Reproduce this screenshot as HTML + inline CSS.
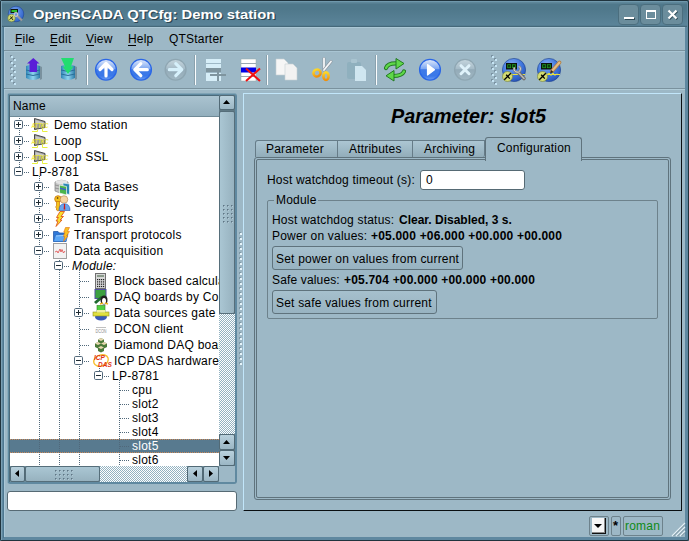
<!DOCTYPE html>
<html><head><meta charset="utf-8">
<style>
*{box-sizing:border-box;margin:0;padding:0}
html,body{width:689px;height:541px;overflow:hidden;background:#4d7383}
body{position:relative;font-family:"Liberation Sans",sans-serif;font-size:12px;color:#000}
.a{position:absolute}
.t{position:absolute;white-space:nowrap;line-height:14px;height:14px;letter-spacing:.2px}
#vp .t{letter-spacing:.25px}
.b{font-weight:bold}
.ul{position:absolute;height:1px;background:#000}
svg{position:absolute;overflow:visible}
.sb{border:1px solid #526a76;border-radius:2px;background:linear-gradient(#b9d1dd,#9bb6c4)}
.sl{border:1px solid #566e7a;border-radius:2px}
.tab{border:1px solid #667c88;border-bottom:none;background:linear-gradient(#acc6d3,#92adba)}
.btn{border:1px solid #5f737d;border-radius:3px;background:linear-gradient(#a6c0cd,#98b3c1)}
</style></head><body>
<!-- window frame -->
<div class="a" style="left:0;top:0;width:689px;height:541px;background:#5f88a0;border:1px solid #20343e;border-radius:2px"></div><div class="a" style="left:1px;top:1px;width:1px;height:539px;background:#7aa0b4"></div><div class="a" style="left:3px;top:27px;width:1px;height:511px;background:#4e7890"></div>
<!-- title bar -->
<div class="a" style="left:2px;top:1px;width:685px;height:26px;background:linear-gradient(#6f98ac 0px,#6f98ac 1px,#5e8699 1px,#5e8699 2px,#4f788b 3px,#4f788b 8px,#5a8398 23px,#5a8398 24px,#557d92 24px,#557d92 25px,#46697a 25px)"></div>
<svg style="left:0;top:0" width="30" height="27"><defs><radialGradient id="glogo2" cx=".4" cy=".35" r=".7"><stop offset="0" stop-color="#7aa8f0"/><stop offset="1" stop-color="#2a5ec8"/></radialGradient></defs>
<circle cx="16" cy="14" r="7.8" fill="url(#glogo2)" stroke="#1d3f8a" stroke-width=".5"/>
<rect x="10.5" y="9" width="7.5" height="4" fill="#101a10"/><rect x="11.5" y="10" width="5.5" height="2" fill="#2cc02c"/>
<circle cx="11.5" cy="18" r="3.8" fill="#d0d870" stroke="#5a6a30" stroke-width=".5"/>
<path d="M9.5 19.5L13 16.5M10.5 16.5L13 20" stroke="#000" stroke-width=".8"/>
<path d="M16.5 15L22 20.5" stroke="#9a9a9a" stroke-width="2.2"/><circle cx="16" cy="14.5" r="1.8" fill="none" stroke="#c8c8c8" stroke-width="1.2"/>
</svg>
<div class="t b" style="left:33px;top:8px;letter-spacing:0;color:#fff;transform:scaleX(1.235);transform-origin:0 0;text-shadow:1px 1px 0 #2d4652">OpenSCADA QTCfg: Demo station</div>
<!-- title buttons -->
<div class="a" style="left:618px;top:4px;width:21px;height:21px;border-radius:4px;background:#6b8d9c;border:1px solid #4b6e7e"></div>
<div class="a" style="left:640px;top:4px;width:21px;height:21px;border-radius:4px;background:#6b8d9c;border:1px solid #4b6e7e"></div>
<div class="a" style="left:662px;top:4px;width:21px;height:21px;border-radius:4px;background:#6b8d9c;border:1px solid #4b6e7e"></div>
<div class="a" style="left:625px;top:18px;width:10px;height:2px;background:#2f4a56"></div>
<div class="a" style="left:624px;top:17px;width:10px;height:2px;background:#fff"></div>
<div class="a" style="left:646px;top:10px;width:10px;height:9px;border:2px solid #fff;border-left-width:1.5px;border-right-width:1.5px;border-bottom-width:1.5px"></div>
<svg style="left:667px;top:9px" width="12" height="12"><path d="M1.5 1.5L9.5 9.5M9.5 1.5L1.5 9.5" stroke="#2f4a56" stroke-width="2.2" transform="translate(.8 .8)"/><path d="M1.5 1.5L9.5 9.5M9.5 1.5L1.5 9.5" stroke="#fff" stroke-width="2.2"/></svg>

<!-- content -->
<div id="content" class="a" style="left:4px;top:27px;width:681px;height:510px;background:#9db8c6;border-left:1px solid #aac8d8;border-top:1px solid #acc8d6"></div><div class="a" style="left:4px;top:89px;width:681px;height:1px;background:#b0ccd8"></div>

<!-- menubar -->
<div class="t" style="left:15px;top:32px">File</div>
<div class="ul" style="left:15px;top:45px;width:7px"></div>
<div class="t" style="left:50px;top:32px">Edit</div>
<div class="ul" style="left:50px;top:45px;width:7px"></div>
<div class="t" style="left:86px;top:32px">View</div>
<div class="ul" style="left:86px;top:45px;width:8px"></div>
<div class="t" style="left:128px;top:32px">Help</div>
<div class="ul" style="left:128px;top:45px;width:8px"></div>
<div class="t" style="left:169px;top:32px">QTStarter</div>
<div class="a" style="left:4px;top:50px;width:681px;height:1px;background:#7a929e"></div><div class="a" style="left:4px;top:51px;width:681px;height:1px;background:#a9c5d3"></div>

<!-- toolbar -->
<svg style="left:0;top:0" width="689" height="100">
<defs>
<linearGradient id="gdb" x1="0" x2="1" y1="0" y2="0"><stop offset="0" stop-color="#2f86b8"/><stop offset=".5" stop-color="#8fd4f0"/><stop offset="1" stop-color="#2a7aa8"/></linearGradient>
<linearGradient id="gblue" x1="0" x2="0" y1="0" y2="1"><stop offset="0" stop-color="#e4ecfa"/><stop offset=".45" stop-color="#7ea8f2"/><stop offset=".5" stop-color="#3f7ae8"/><stop offset=".8" stop-color="#3a78e8"/><stop offset="1" stop-color="#6a9cf4"/></linearGradient>
<linearGradient id="ggray" x1="0" x2="0" y1="0" y2="1"><stop offset="0" stop-color="#c6d6de"/><stop offset=".45" stop-color="#a6bcc8"/><stop offset=".5" stop-color="#93abb8"/><stop offset="1" stop-color="#a2b8c4"/></linearGradient>
<radialGradient id="glogo" cx=".4" cy=".3" r=".75"><stop offset="0" stop-color="#86b0f4"/><stop offset=".6" stop-color="#3e74dc"/><stop offset="1" stop-color="#2550b4"/></radialGradient>
</defs>
<!-- handle dots -->
<rect x="10" y="55" width="2" height="2" fill="#7a92a2"/><rect x="11" y="56" width="2" height="2" fill="#c6e4f4"/><rect x="13" y="58" width="2" height="2" fill="#7a92a2"/><rect x="14" y="59" width="2" height="2" fill="#c6e4f4"/><rect x="10" y="61" width="2" height="2" fill="#7a92a2"/><rect x="11" y="62" width="2" height="2" fill="#c6e4f4"/><rect x="13" y="64" width="2" height="2" fill="#7a92a2"/><rect x="14" y="65" width="2" height="2" fill="#c6e4f4"/><rect x="10" y="67" width="2" height="2" fill="#7a92a2"/><rect x="11" y="68" width="2" height="2" fill="#c6e4f4"/><rect x="13" y="70" width="2" height="2" fill="#7a92a2"/><rect x="14" y="71" width="2" height="2" fill="#c6e4f4"/><rect x="10" y="73" width="2" height="2" fill="#7a92a2"/><rect x="11" y="74" width="2" height="2" fill="#c6e4f4"/><rect x="13" y="76" width="2" height="2" fill="#7a92a2"/><rect x="14" y="77" width="2" height="2" fill="#c6e4f4"/><rect x="10" y="79" width="2" height="2" fill="#7a92a2"/><rect x="11" y="80" width="2" height="2" fill="#c6e4f4"/><rect x="13" y="82" width="2" height="2" fill="#7a92a2"/><rect x="14" y="83" width="2" height="2" fill="#c6e4f4"/><rect x="491" y="55" width="2" height="2" fill="#7a92a2"/><rect x="492" y="56" width="2" height="2" fill="#c6e4f4"/><rect x="494" y="58" width="2" height="2" fill="#7a92a2"/><rect x="495" y="59" width="2" height="2" fill="#c6e4f4"/><rect x="491" y="61" width="2" height="2" fill="#7a92a2"/><rect x="492" y="62" width="2" height="2" fill="#c6e4f4"/><rect x="494" y="64" width="2" height="2" fill="#7a92a2"/><rect x="495" y="65" width="2" height="2" fill="#c6e4f4"/><rect x="491" y="67" width="2" height="2" fill="#7a92a2"/><rect x="492" y="68" width="2" height="2" fill="#c6e4f4"/><rect x="494" y="70" width="2" height="2" fill="#7a92a2"/><rect x="495" y="71" width="2" height="2" fill="#c6e4f4"/><rect x="491" y="73" width="2" height="2" fill="#7a92a2"/><rect x="492" y="74" width="2" height="2" fill="#c6e4f4"/><rect x="494" y="76" width="2" height="2" fill="#7a92a2"/><rect x="495" y="77" width="2" height="2" fill="#c6e4f4"/><rect x="491" y="79" width="2" height="2" fill="#7a92a2"/><rect x="492" y="80" width="2" height="2" fill="#c6e4f4"/><rect x="494" y="82" width="2" height="2" fill="#7a92a2"/><rect x="495" y="83" width="2" height="2" fill="#c6e4f4"/>
<!-- separators -->
<rect x="86" y="55" width="1" height="30" fill="#8aa1ad"/><rect x="87" y="55" width="1" height="30" fill="#fbfdfe"/><rect x="194" y="55" width="1" height="30" fill="#8aa1ad"/><rect x="195" y="55" width="1" height="30" fill="#fbfdfe"/><rect x="266" y="55" width="1" height="30" fill="#8aa1ad"/><rect x="267" y="55" width="1" height="30" fill="#fbfdfe"/><rect x="375" y="55" width="1" height="30" fill="#8aa1ad"/><rect x="376" y="55" width="1" height="30" fill="#fbfdfe"/>
<!-- icon1 db up -->
<g>
<path d="M26 66 Q33 63 40 66 L40 78 Q33 82 26 78 Z" fill="url(#gdb)"/>
<path d="M26 70 Q33 73 40 70 M26 74 Q33 77 40 74" stroke="#2a6e98" stroke-width="1" fill="none"/>
<path d="M40.5 66 L41.5 67 L41.5 79 L40.5 80Z" fill="#2a3a44" opacity=".6"/>
<path d="M33.3 58 L39.5 63.5 L37 63.5 L37 72 L29.5 72 L29.5 63.5 L27 63.5 Z" fill="#5a1ed8"/>
</g>
<!-- icon2 db down -->
<g>
<path d="M61 66 Q68 63 75 66 L75 78 Q68 82 61 78 Z" fill="url(#gdb)"/>
<path d="M61 70 Q68 73 75 70 M61 74 Q68 77 75 74" stroke="#2a6e98" stroke-width="1" fill="none"/>
<path d="M75.5 66 L76.5 67 L76.5 79 L75.5 80Z" fill="#2a3a44" opacity=".6"/>
<path d="M61 58 L74 58 L71 66.5 L73.5 66.5 L68 74 L62.5 66.5 L65 66.5 Z" fill="#22dd70"/>
</g>
<!-- icon3 up -->
<circle cx="106" cy="69.7" r="10.4" fill="url(#gblue)" stroke="#2a66e6" stroke-width="1.3"/>
<path d="M100 69.5 L106 63.5 L112 69.5 M106 64.5 L106 76" fill="none" stroke="#fff" stroke-width="3.2" stroke-linecap="round" stroke-linejoin="round"/>
<!-- icon4 back -->
<circle cx="141" cy="69.7" r="10.4" fill="url(#gblue)" stroke="#2a66e6" stroke-width="1.3"/>
<path d="M140.8 63.7 L134.8 69.7 L140.8 75.7 M135.8 69.7 L147.3 69.7" fill="none" stroke="#fff" stroke-width="3.2" stroke-linecap="round" stroke-linejoin="round"/>
<!-- icon5 forward gray -->
<circle cx="175.6" cy="69.7" r="10.4" fill="url(#ggray)" stroke="#8ea6b2" stroke-width="1.3"/>
<path d="M175.8 63.7 L181.8 69.7 L175.8 75.7 M180.8 69.7 L169.3 69.7" fill="none" stroke="#d6f0fb" stroke-width="3.2" stroke-linecap="round" stroke-linejoin="round"/>
<!-- icon6 add row gray -->
<g>
<rect x="206" y="59" width="15" height="4" fill="#d6eef8"/><rect x="206" y="64" width="15" height="4" fill="#d6eef8"/>
<rect x="206" y="68" width="15" height="4" fill="#7f959f"/>
<rect x="206" y="73" width="15" height="4" fill="#d6eef8"/><rect x="206" y="77" width="15" height="4" fill="#d6eef8"/>
<rect x="210" y="74" width="16" height="2" fill="#7f959f"/><rect x="217" y="69" width="2" height="12" fill="#7f959f"/>
</g>
<!-- icon7 delete row -->
<g>
<rect x="241" y="59" width="15" height="22" fill="#fff" stroke="#9aa" stroke-width=".5"/>
<rect x="241" y="63" width="15" height="1" fill="#9aa8b0"/><rect x="241" y="76" width="15" height="1" fill="#9aa8b0"/>
<rect x="241" y="67.5" width="15" height="5" fill="#0000e8"/>
<path d="M246 68.5 L260 81 M260 68.5 L246 81" stroke="#f01010" stroke-width="2"/>
</g>
<!-- icon8 copy -->
<g>
<path d="M276 59 L284 59 L288 63 L288 75 L276 75 Z" fill="#f6f6f6" stroke="#c8d0d4" stroke-width=".6"/>
<path d="M285 64 L293 64 L297 68 L297 80 L285 80 Z" fill="#f2f2f2" stroke="#c8d0d4" stroke-width=".6"/>
</g>
<!-- icon9 cut -->
<defs><linearGradient id="gsc" x1="0" x2="0" y1="0" y2="1"><stop offset="0" stop-color="#fbd62a"/><stop offset="1" stop-color="#f0900c"/></linearGradient></defs>
<g>
<path d="M324 58.5 L324 69.5" stroke="#8d97a0" stroke-width="3" stroke-linecap="round"/>
<path d="M324 58.5 L324 69.5" stroke="#f4f6f8" stroke-width="1.8" stroke-linecap="round"/>
<path d="M331 61.5 L324 70" stroke="#8d97a0" stroke-width="3" stroke-linecap="round"/>
<path d="M331 61.5 L324 70" stroke="#f4f6f8" stroke-width="1.8" stroke-linecap="round"/>
<ellipse cx="317" cy="73" rx="3.6" ry="3.4" fill="none" stroke="url(#gsc)" stroke-width="2.6" transform="rotate(-25 317 73)"/>
<ellipse cx="326" cy="76.2" rx="2.6" ry="3.8" fill="none" stroke="url(#gsc)" stroke-width="2.6"/>
</g>
<!-- icon10 paste gray -->
<g>
<rect x="347" y="62" width="14" height="17" rx="2" fill="#8fb0be"/>
<rect x="351" y="59" width="6" height="4" rx="1" fill="#a9c4d0"/>
<path d="M355 66 L362 66 L366 70 L366 81 L355 81 Z" fill="#cfe6f0"/>
</g>
<!-- icon11 refresh -->
<g fill="none" stroke-linecap="round">
<path d="M386 68 Q388 63 397 63.5" stroke="#237a23" stroke-width="4.2"/>
<path d="M386 68 Q388 63 397 63.5" stroke="#5fd84a" stroke-width="2.2"/>
<path d="M404 71.5 Q402 76 393 76" stroke="#237a23" stroke-width="4.2"/>
<path d="M404 71.5 Q402 76 393 76" stroke="#5fd84a" stroke-width="2.2"/>
</g>
<path d="M396 58.5 L404 63.5 L396 69 Z" fill="#5fd84a" stroke="#237a23" stroke-width="1"/>
<path d="M394 70.5 L386 75.8 L394 81 Z" fill="#5fd84a" stroke="#237a23" stroke-width="1"/>
<!-- icon12 play -->
<circle cx="430" cy="69.7" r="10.4" fill="url(#gblue)" stroke="#2a66e6" stroke-width="1.3"/>
<path d="M427.5 64.5 L434.5 69.7 L427.5 75 Z" fill="#fff" stroke="#fff" stroke-width="1.2" stroke-linejoin="round"/>
<!-- icon13 stop gray -->
<circle cx="465" cy="69.7" r="10.4" fill="url(#ggray)" stroke="#8ea6b2" stroke-width="1.3"/>
<path d="M461 65.7 L469 73.7 M469 65.7 L461 73.7" stroke="#dff2fa" stroke-width="3" stroke-linecap="round"/>
<!-- icon14 logo wrench -->
<g transform="translate(0 0)">
<circle cx="514" cy="70" r="11.6" fill="url(#glogo)" stroke="#1d3f8a" stroke-width=".6"/>
<rect x="506" y="63" width="11" height="6.5" fill="#0c120c"/>
<rect x="507.3" y="64.3" width="3.8" height="3.8" fill="#22a022"/><rect x="512" y="64.3" width="3.8" height="3.8" fill="#22a022"/>
<rect x="508" y="65" width="2.4" height="2.4" fill="#0c3a0c"/><rect x="512.7" y="65" width="2.4" height="2.4" fill="#0c3a0c"/>
<path d="M508 74.5 L525 74.5" stroke="#e8e040" stroke-width="1"/>
<circle cx="507.5" cy="76.5" r="5" fill="#d4dc74" stroke="#7f8a3c" stroke-width=".7"/>
<path d="M504.3 79.8 L510.8 73.3 M506.2 74.8 L509.8 78.6" stroke="#000" stroke-width="1.3"/>
<path d="M518.5 72.5 L524 78.5" stroke="#6a6a6a" stroke-width="3.6" stroke-linecap="round"/>
<path d="M518.5 72.5 L524 78.5" stroke="#b8b8b8" stroke-width="1.6" stroke-linecap="round"/>
<path d="M514.5 67.5 A3.2 3.2 0 1 0 518.8 66.2" fill="none" stroke="#8a8a8a" stroke-width="2.4"/>
<path d="M514.5 67.5 A3.2 3.2 0 1 0 518.8 66.2" fill="none" stroke="#d0d0d0" stroke-width="1"/>
</g>
<!-- icon15 logo pencil -->
<g transform="translate(35 0)">
<circle cx="514" cy="70" r="11.6" fill="url(#glogo)" stroke="#1d3f8a" stroke-width=".6"/>
<rect x="506" y="63" width="11" height="6.5" fill="#0c120c"/>
<rect x="507.3" y="64.3" width="3.8" height="3.8" fill="#22a022"/><rect x="512" y="64.3" width="3.8" height="3.8" fill="#22a022"/>
<rect x="508" y="65" width="2.4" height="2.4" fill="#0c3a0c"/><rect x="512.7" y="65" width="2.4" height="2.4" fill="#0c3a0c"/>
<path d="M508 74.5 L525 74.5" stroke="#e8e040" stroke-width="1"/>
<circle cx="507.5" cy="76.5" r="5" fill="#d4dc74" stroke="#7f8a3c" stroke-width=".7"/>
<path d="M504.3 79.8 L510.8 73.3 M506.2 74.8 L509.8 78.6" stroke="#000" stroke-width="1.3"/>
<path d="M512 74.5 L514 73 L516 75.5 L518 73 L520 75.5 L522 73.5" fill="none" stroke="#e8e040" stroke-width="1"/>
<path d="M517 71 L524.5 62.5" stroke="#b08048" stroke-width="3.8" stroke-linecap="round"/>
<path d="M517 71 L524.5 62.5" stroke="#e6bc84" stroke-width="2" stroke-linecap="round"/>
<path d="M515 73.5 L516.2 70 L518.4 72 Z" fill="#3a2a1a"/>
</g>
</svg>

<div class="a" style="left:4px;top:88px;width:681px;height:1px;background:#7a929e"></div>

<!-- tree -->
<!--TREE-->
<!-- tree frame -->
<div class="a" style="left:7px;top:93px;width:230px;height:391px;border-radius:3px;background:#6089a0;border-top:1px solid #7fa3b5;border-left:1px solid #8aacbc"></div>
<div class="a" style="left:8px;top:94px;width:1px;height:389px;background:#5e8aa0"></div>
<div class="a" style="left:9px;top:95px;width:226px;height:387px;background:#4b6b7b"></div>
<div class="a" style="left:10px;top:96px;width:209px;height:21px;background:linear-gradient(#aac3d0,#93afbd);border-bottom:1px solid #6f8a97"></div>
<div class="t" style="left:13px;top:99px">Name</div>
<div id="vp" class="a" style="left:10px;top:117px;width:209px;height:349px;overflow:hidden;background:#fff">
  <div class="a" style="left:0;top:322px;width:209px;height:14px;background:#587a8f"></div><div class="a" style="left:0;top:322px;width:209px;height:1px;background:repeating-linear-gradient(90deg,#c9895a 0 1px,transparent 1px 2px)"></div><div class="a" style="left:0;top:335px;width:209px;height:1px;background:repeating-linear-gradient(90deg,#c9895a 0 1px,transparent 1px 2px)"></div>
  <svg style="left:-10px;top:-117px" width="700" height="600"><g><g fill="#50687a"><rect x="24" y="125" width="1" height="1"/><rect x="26" y="125" width="1" height="1"/><rect x="28" y="125" width="1" height="1"/><rect x="24" y="141" width="1" height="1"/><rect x="26" y="141" width="1" height="1"/><rect x="28" y="141" width="1" height="1"/><rect x="24" y="157" width="1" height="1"/><rect x="26" y="157" width="1" height="1"/><rect x="28" y="157" width="1" height="1"/><rect x="24" y="172" width="1" height="1"/><rect x="26" y="172" width="1" height="1"/><rect x="28" y="172" width="1" height="1"/><rect x="44" y="187" width="1" height="1"/><rect x="46" y="187" width="1" height="1"/><rect x="48" y="187" width="1" height="1"/><rect x="44" y="203" width="1" height="1"/><rect x="46" y="203" width="1" height="1"/><rect x="48" y="203" width="1" height="1"/><rect x="44" y="219" width="1" height="1"/><rect x="46" y="219" width="1" height="1"/><rect x="48" y="219" width="1" height="1"/><rect x="44" y="235" width="1" height="1"/><rect x="46" y="235" width="1" height="1"/><rect x="48" y="235" width="1" height="1"/><rect x="44" y="251" width="1" height="1"/><rect x="46" y="251" width="1" height="1"/><rect x="48" y="251" width="1" height="1"/><rect x="64" y="266" width="1" height="1"/><rect x="66" y="266" width="1" height="1"/><rect x="68" y="266" width="1" height="1"/><rect x="80" y="281" width="1" height="1"/><rect x="82" y="281" width="1" height="1"/><rect x="84" y="281" width="1" height="1"/><rect x="86" y="281" width="1" height="1"/><rect x="88" y="281" width="1" height="1"/><rect x="80" y="297" width="1" height="1"/><rect x="82" y="297" width="1" height="1"/><rect x="84" y="297" width="1" height="1"/><rect x="86" y="297" width="1" height="1"/><rect x="88" y="297" width="1" height="1"/><rect x="84" y="313" width="1" height="1"/><rect x="86" y="313" width="1" height="1"/><rect x="88" y="313" width="1" height="1"/><rect x="80" y="329" width="1" height="1"/><rect x="82" y="329" width="1" height="1"/><rect x="84" y="329" width="1" height="1"/><rect x="86" y="329" width="1" height="1"/><rect x="88" y="329" width="1" height="1"/><rect x="80" y="345" width="1" height="1"/><rect x="82" y="345" width="1" height="1"/><rect x="84" y="345" width="1" height="1"/><rect x="86" y="345" width="1" height="1"/><rect x="88" y="345" width="1" height="1"/><rect x="84" y="361" width="1" height="1"/><rect x="86" y="361" width="1" height="1"/><rect x="88" y="361" width="1" height="1"/><rect x="104" y="376" width="1" height="1"/><rect x="106" y="376" width="1" height="1"/><rect x="108" y="376" width="1" height="1"/><rect x="120" y="390" width="1" height="1"/><rect x="122" y="390" width="1" height="1"/><rect x="124" y="390" width="1" height="1"/><rect x="126" y="390" width="1" height="1"/><rect x="128" y="390" width="1" height="1"/><rect x="120" y="404" width="1" height="1"/><rect x="122" y="404" width="1" height="1"/><rect x="124" y="404" width="1" height="1"/><rect x="126" y="404" width="1" height="1"/><rect x="128" y="404" width="1" height="1"/><rect x="120" y="418" width="1" height="1"/><rect x="122" y="418" width="1" height="1"/><rect x="124" y="418" width="1" height="1"/><rect x="126" y="418" width="1" height="1"/><rect x="128" y="418" width="1" height="1"/><rect x="120" y="432" width="1" height="1"/><rect x="122" y="432" width="1" height="1"/><rect x="124" y="432" width="1" height="1"/><rect x="126" y="432" width="1" height="1"/><rect x="128" y="432" width="1" height="1"/><rect x="120" y="446" width="1" height="1"/><rect x="122" y="446" width="1" height="1"/><rect x="124" y="446" width="1" height="1"/><rect x="126" y="446" width="1" height="1"/><rect x="128" y="446" width="1" height="1"/><rect x="120" y="460" width="1" height="1"/><rect x="122" y="460" width="1" height="1"/><rect x="124" y="460" width="1" height="1"/><rect x="126" y="460" width="1" height="1"/><rect x="128" y="460" width="1" height="1"/><rect x="120" y="474" width="1" height="1"/><rect x="122" y="474" width="1" height="1"/><rect x="124" y="474" width="1" height="1"/><rect x="126" y="474" width="1" height="1"/><rect x="128" y="474" width="1" height="1"/><rect x="19" y="118" width="1" height="1"/><rect x="19" y="120" width="1" height="1"/><rect x="19" y="122" width="1" height="1"/><rect x="19" y="124" width="1" height="1"/><rect x="19" y="126" width="1" height="1"/><rect x="19" y="128" width="1" height="1"/><rect x="19" y="130" width="1" height="1"/><rect x="19" y="132" width="1" height="1"/><rect x="19" y="134" width="1" height="1"/><rect x="19" y="136" width="1" height="1"/><rect x="19" y="138" width="1" height="1"/><rect x="19" y="140" width="1" height="1"/><rect x="19" y="142" width="1" height="1"/><rect x="19" y="144" width="1" height="1"/><rect x="19" y="146" width="1" height="1"/><rect x="19" y="148" width="1" height="1"/><rect x="19" y="150" width="1" height="1"/><rect x="19" y="152" width="1" height="1"/><rect x="19" y="154" width="1" height="1"/><rect x="19" y="156" width="1" height="1"/><rect x="19" y="158" width="1" height="1"/><rect x="19" y="160" width="1" height="1"/><rect x="19" y="162" width="1" height="1"/><rect x="19" y="164" width="1" height="1"/><rect x="19" y="166" width="1" height="1"/><rect x="19" y="168" width="1" height="1"/><rect x="19" y="170" width="1" height="1"/><rect x="19" y="172" width="1" height="1"/><rect x="39" y="176" width="1" height="1"/><rect x="39" y="178" width="1" height="1"/><rect x="39" y="180" width="1" height="1"/><rect x="39" y="182" width="1" height="1"/><rect x="39" y="184" width="1" height="1"/><rect x="39" y="186" width="1" height="1"/><rect x="39" y="188" width="1" height="1"/><rect x="39" y="190" width="1" height="1"/><rect x="39" y="192" width="1" height="1"/><rect x="39" y="194" width="1" height="1"/><rect x="39" y="196" width="1" height="1"/><rect x="39" y="198" width="1" height="1"/><rect x="39" y="200" width="1" height="1"/><rect x="39" y="202" width="1" height="1"/><rect x="39" y="204" width="1" height="1"/><rect x="39" y="206" width="1" height="1"/><rect x="39" y="208" width="1" height="1"/><rect x="39" y="210" width="1" height="1"/><rect x="39" y="212" width="1" height="1"/><rect x="39" y="214" width="1" height="1"/><rect x="39" y="216" width="1" height="1"/><rect x="39" y="218" width="1" height="1"/><rect x="39" y="220" width="1" height="1"/><rect x="39" y="222" width="1" height="1"/><rect x="39" y="224" width="1" height="1"/><rect x="39" y="226" width="1" height="1"/><rect x="39" y="228" width="1" height="1"/><rect x="39" y="230" width="1" height="1"/><rect x="39" y="232" width="1" height="1"/><rect x="39" y="234" width="1" height="1"/><rect x="39" y="236" width="1" height="1"/><rect x="39" y="238" width="1" height="1"/><rect x="39" y="240" width="1" height="1"/><rect x="39" y="242" width="1" height="1"/><rect x="39" y="244" width="1" height="1"/><rect x="39" y="246" width="1" height="1"/><rect x="39" y="248" width="1" height="1"/><rect x="39" y="250" width="1" height="1"/><rect x="59" y="256" width="1" height="1"/><rect x="59" y="258" width="1" height="1"/><rect x="59" y="260" width="1" height="1"/><rect x="59" y="262" width="1" height="1"/><rect x="59" y="264" width="1" height="1"/><rect x="59" y="266" width="1" height="1"/><rect x="79" y="270" width="1" height="1"/><rect x="79" y="272" width="1" height="1"/><rect x="79" y="274" width="1" height="1"/><rect x="79" y="276" width="1" height="1"/><rect x="79" y="278" width="1" height="1"/><rect x="79" y="280" width="1" height="1"/><rect x="79" y="282" width="1" height="1"/><rect x="79" y="284" width="1" height="1"/><rect x="79" y="286" width="1" height="1"/><rect x="79" y="288" width="1" height="1"/><rect x="79" y="290" width="1" height="1"/><rect x="79" y="292" width="1" height="1"/><rect x="79" y="294" width="1" height="1"/><rect x="79" y="296" width="1" height="1"/><rect x="79" y="298" width="1" height="1"/><rect x="79" y="300" width="1" height="1"/><rect x="79" y="302" width="1" height="1"/><rect x="79" y="304" width="1" height="1"/><rect x="79" y="306" width="1" height="1"/><rect x="79" y="308" width="1" height="1"/><rect x="79" y="310" width="1" height="1"/><rect x="79" y="312" width="1" height="1"/><rect x="79" y="314" width="1" height="1"/><rect x="79" y="316" width="1" height="1"/><rect x="79" y="318" width="1" height="1"/><rect x="79" y="320" width="1" height="1"/><rect x="79" y="322" width="1" height="1"/><rect x="79" y="324" width="1" height="1"/><rect x="79" y="326" width="1" height="1"/><rect x="79" y="328" width="1" height="1"/><rect x="79" y="330" width="1" height="1"/><rect x="79" y="332" width="1" height="1"/><rect x="79" y="334" width="1" height="1"/><rect x="79" y="336" width="1" height="1"/><rect x="79" y="338" width="1" height="1"/><rect x="79" y="340" width="1" height="1"/><rect x="79" y="342" width="1" height="1"/><rect x="79" y="344" width="1" height="1"/><rect x="79" y="346" width="1" height="1"/><rect x="79" y="348" width="1" height="1"/><rect x="79" y="350" width="1" height="1"/><rect x="79" y="352" width="1" height="1"/><rect x="79" y="354" width="1" height="1"/><rect x="79" y="356" width="1" height="1"/><rect x="79" y="358" width="1" height="1"/><rect x="79" y="360" width="1" height="1"/><rect x="99" y="366" width="1" height="1"/><rect x="99" y="368" width="1" height="1"/><rect x="99" y="370" width="1" height="1"/><rect x="99" y="372" width="1" height="1"/><rect x="99" y="374" width="1" height="1"/><rect x="99" y="376" width="1" height="1"/><rect x="119" y="380" width="1" height="1"/><rect x="119" y="382" width="1" height="1"/><rect x="119" y="384" width="1" height="1"/><rect x="119" y="386" width="1" height="1"/><rect x="119" y="388" width="1" height="1"/><rect x="119" y="390" width="1" height="1"/><rect x="119" y="392" width="1" height="1"/><rect x="119" y="394" width="1" height="1"/><rect x="119" y="396" width="1" height="1"/><rect x="119" y="398" width="1" height="1"/><rect x="119" y="400" width="1" height="1"/><rect x="119" y="402" width="1" height="1"/><rect x="119" y="404" width="1" height="1"/><rect x="119" y="406" width="1" height="1"/><rect x="119" y="408" width="1" height="1"/><rect x="119" y="410" width="1" height="1"/><rect x="119" y="412" width="1" height="1"/><rect x="119" y="414" width="1" height="1"/><rect x="119" y="416" width="1" height="1"/><rect x="119" y="418" width="1" height="1"/><rect x="119" y="420" width="1" height="1"/><rect x="119" y="422" width="1" height="1"/><rect x="119" y="424" width="1" height="1"/><rect x="119" y="426" width="1" height="1"/><rect x="119" y="428" width="1" height="1"/><rect x="119" y="430" width="1" height="1"/><rect x="119" y="432" width="1" height="1"/><rect x="119" y="434" width="1" height="1"/><rect x="119" y="436" width="1" height="1"/><rect x="119" y="438" width="1" height="1"/><rect x="119" y="440" width="1" height="1"/><rect x="119" y="442" width="1" height="1"/><rect x="119" y="444" width="1" height="1"/><rect x="119" y="446" width="1" height="1"/><rect x="119" y="448" width="1" height="1"/><rect x="119" y="450" width="1" height="1"/><rect x="119" y="452" width="1" height="1"/><rect x="119" y="454" width="1" height="1"/><rect x="119" y="456" width="1" height="1"/><rect x="119" y="458" width="1" height="1"/><rect x="119" y="460" width="1" height="1"/><rect x="119" y="462" width="1" height="1"/><rect x="119" y="464" width="1" height="1"/><rect x="119" y="466" width="1" height="1"/><rect x="119" y="468" width="1" height="1"/><rect x="119" y="470" width="1" height="1"/><rect x="119" y="472" width="1" height="1"/><rect x="119" y="474" width="1" height="1"/><rect x="39" y="176" width="1" height="1"/><rect x="39" y="178" width="1" height="1"/><rect x="39" y="180" width="1" height="1"/><rect x="39" y="182" width="1" height="1"/><rect x="39" y="184" width="1" height="1"/><rect x="39" y="186" width="1" height="1"/><rect x="39" y="188" width="1" height="1"/><rect x="39" y="190" width="1" height="1"/><rect x="39" y="192" width="1" height="1"/><rect x="39" y="194" width="1" height="1"/><rect x="39" y="196" width="1" height="1"/><rect x="39" y="198" width="1" height="1"/><rect x="39" y="200" width="1" height="1"/><rect x="39" y="202" width="1" height="1"/><rect x="39" y="204" width="1" height="1"/><rect x="39" y="206" width="1" height="1"/><rect x="39" y="208" width="1" height="1"/><rect x="39" y="210" width="1" height="1"/><rect x="39" y="212" width="1" height="1"/><rect x="39" y="214" width="1" height="1"/><rect x="39" y="216" width="1" height="1"/><rect x="39" y="218" width="1" height="1"/><rect x="39" y="220" width="1" height="1"/><rect x="39" y="222" width="1" height="1"/><rect x="39" y="224" width="1" height="1"/><rect x="39" y="226" width="1" height="1"/><rect x="39" y="228" width="1" height="1"/><rect x="39" y="230" width="1" height="1"/><rect x="39" y="232" width="1" height="1"/><rect x="39" y="234" width="1" height="1"/><rect x="39" y="236" width="1" height="1"/><rect x="39" y="238" width="1" height="1"/><rect x="39" y="240" width="1" height="1"/><rect x="39" y="242" width="1" height="1"/><rect x="39" y="244" width="1" height="1"/><rect x="39" y="246" width="1" height="1"/><rect x="39" y="248" width="1" height="1"/><rect x="39" y="250" width="1" height="1"/><rect x="39" y="252" width="1" height="1"/><rect x="39" y="254" width="1" height="1"/><rect x="39" y="256" width="1" height="1"/><rect x="39" y="258" width="1" height="1"/><rect x="39" y="260" width="1" height="1"/><rect x="39" y="262" width="1" height="1"/><rect x="39" y="264" width="1" height="1"/><rect x="39" y="266" width="1" height="1"/><rect x="39" y="268" width="1" height="1"/><rect x="39" y="270" width="1" height="1"/><rect x="39" y="272" width="1" height="1"/><rect x="39" y="274" width="1" height="1"/><rect x="39" y="276" width="1" height="1"/><rect x="39" y="278" width="1" height="1"/><rect x="39" y="280" width="1" height="1"/><rect x="39" y="282" width="1" height="1"/><rect x="39" y="284" width="1" height="1"/><rect x="39" y="286" width="1" height="1"/><rect x="39" y="288" width="1" height="1"/><rect x="39" y="290" width="1" height="1"/><rect x="39" y="292" width="1" height="1"/><rect x="39" y="294" width="1" height="1"/><rect x="39" y="296" width="1" height="1"/><rect x="39" y="298" width="1" height="1"/><rect x="39" y="300" width="1" height="1"/><rect x="39" y="302" width="1" height="1"/><rect x="39" y="304" width="1" height="1"/><rect x="39" y="306" width="1" height="1"/><rect x="39" y="308" width="1" height="1"/><rect x="39" y="310" width="1" height="1"/><rect x="39" y="312" width="1" height="1"/><rect x="39" y="314" width="1" height="1"/><rect x="39" y="316" width="1" height="1"/><rect x="39" y="318" width="1" height="1"/><rect x="39" y="320" width="1" height="1"/><rect x="39" y="322" width="1" height="1"/><rect x="39" y="324" width="1" height="1"/><rect x="39" y="326" width="1" height="1"/><rect x="39" y="328" width="1" height="1"/><rect x="39" y="330" width="1" height="1"/><rect x="39" y="332" width="1" height="1"/><rect x="39" y="334" width="1" height="1"/><rect x="39" y="336" width="1" height="1"/><rect x="39" y="338" width="1" height="1"/><rect x="39" y="340" width="1" height="1"/><rect x="39" y="342" width="1" height="1"/><rect x="39" y="344" width="1" height="1"/><rect x="39" y="346" width="1" height="1"/><rect x="39" y="348" width="1" height="1"/><rect x="39" y="350" width="1" height="1"/><rect x="39" y="352" width="1" height="1"/><rect x="39" y="354" width="1" height="1"/><rect x="39" y="356" width="1" height="1"/><rect x="39" y="358" width="1" height="1"/><rect x="39" y="360" width="1" height="1"/><rect x="39" y="362" width="1" height="1"/><rect x="39" y="364" width="1" height="1"/><rect x="39" y="366" width="1" height="1"/><rect x="39" y="368" width="1" height="1"/><rect x="39" y="370" width="1" height="1"/><rect x="39" y="372" width="1" height="1"/><rect x="39" y="374" width="1" height="1"/><rect x="39" y="376" width="1" height="1"/><rect x="39" y="378" width="1" height="1"/><rect x="39" y="380" width="1" height="1"/><rect x="39" y="382" width="1" height="1"/><rect x="39" y="384" width="1" height="1"/><rect x="39" y="386" width="1" height="1"/><rect x="39" y="388" width="1" height="1"/><rect x="39" y="390" width="1" height="1"/><rect x="39" y="392" width="1" height="1"/><rect x="39" y="394" width="1" height="1"/><rect x="39" y="396" width="1" height="1"/><rect x="39" y="398" width="1" height="1"/><rect x="39" y="400" width="1" height="1"/><rect x="39" y="402" width="1" height="1"/><rect x="39" y="404" width="1" height="1"/><rect x="39" y="406" width="1" height="1"/><rect x="39" y="408" width="1" height="1"/><rect x="39" y="410" width="1" height="1"/><rect x="39" y="412" width="1" height="1"/><rect x="39" y="414" width="1" height="1"/><rect x="39" y="416" width="1" height="1"/><rect x="39" y="418" width="1" height="1"/><rect x="39" y="420" width="1" height="1"/><rect x="39" y="422" width="1" height="1"/><rect x="39" y="424" width="1" height="1"/><rect x="39" y="426" width="1" height="1"/><rect x="39" y="428" width="1" height="1"/><rect x="39" y="430" width="1" height="1"/><rect x="39" y="432" width="1" height="1"/><rect x="39" y="434" width="1" height="1"/><rect x="39" y="436" width="1" height="1"/><rect x="39" y="438" width="1" height="1"/><rect x="39" y="440" width="1" height="1"/><rect x="39" y="442" width="1" height="1"/><rect x="39" y="444" width="1" height="1"/><rect x="39" y="446" width="1" height="1"/><rect x="39" y="448" width="1" height="1"/><rect x="39" y="450" width="1" height="1"/><rect x="39" y="452" width="1" height="1"/><rect x="39" y="454" width="1" height="1"/><rect x="39" y="456" width="1" height="1"/><rect x="39" y="458" width="1" height="1"/><rect x="39" y="460" width="1" height="1"/><rect x="39" y="462" width="1" height="1"/><rect x="39" y="464" width="1" height="1"/><rect x="39" y="466" width="1" height="1"/><rect x="39" y="468" width="1" height="1"/><rect x="39" y="470" width="1" height="1"/><rect x="59" y="256" width="1" height="1"/><rect x="59" y="258" width="1" height="1"/><rect x="59" y="260" width="1" height="1"/><rect x="59" y="262" width="1" height="1"/><rect x="59" y="264" width="1" height="1"/><rect x="59" y="266" width="1" height="1"/><rect x="59" y="268" width="1" height="1"/><rect x="59" y="270" width="1" height="1"/><rect x="59" y="272" width="1" height="1"/><rect x="59" y="274" width="1" height="1"/><rect x="59" y="276" width="1" height="1"/><rect x="59" y="278" width="1" height="1"/><rect x="59" y="280" width="1" height="1"/><rect x="59" y="282" width="1" height="1"/><rect x="59" y="284" width="1" height="1"/><rect x="59" y="286" width="1" height="1"/><rect x="59" y="288" width="1" height="1"/><rect x="59" y="290" width="1" height="1"/><rect x="59" y="292" width="1" height="1"/><rect x="59" y="294" width="1" height="1"/><rect x="59" y="296" width="1" height="1"/><rect x="59" y="298" width="1" height="1"/><rect x="59" y="300" width="1" height="1"/><rect x="59" y="302" width="1" height="1"/><rect x="59" y="304" width="1" height="1"/><rect x="59" y="306" width="1" height="1"/><rect x="59" y="308" width="1" height="1"/><rect x="59" y="310" width="1" height="1"/><rect x="59" y="312" width="1" height="1"/><rect x="59" y="314" width="1" height="1"/><rect x="59" y="316" width="1" height="1"/><rect x="59" y="318" width="1" height="1"/><rect x="59" y="320" width="1" height="1"/><rect x="59" y="322" width="1" height="1"/><rect x="59" y="324" width="1" height="1"/><rect x="59" y="326" width="1" height="1"/><rect x="59" y="328" width="1" height="1"/><rect x="59" y="330" width="1" height="1"/><rect x="59" y="332" width="1" height="1"/><rect x="59" y="334" width="1" height="1"/><rect x="59" y="336" width="1" height="1"/><rect x="59" y="338" width="1" height="1"/><rect x="59" y="340" width="1" height="1"/><rect x="59" y="342" width="1" height="1"/><rect x="59" y="344" width="1" height="1"/><rect x="59" y="346" width="1" height="1"/><rect x="59" y="348" width="1" height="1"/><rect x="59" y="350" width="1" height="1"/><rect x="59" y="352" width="1" height="1"/><rect x="59" y="354" width="1" height="1"/><rect x="59" y="356" width="1" height="1"/><rect x="59" y="358" width="1" height="1"/><rect x="59" y="360" width="1" height="1"/><rect x="59" y="362" width="1" height="1"/><rect x="59" y="364" width="1" height="1"/><rect x="59" y="366" width="1" height="1"/><rect x="59" y="368" width="1" height="1"/><rect x="59" y="370" width="1" height="1"/><rect x="59" y="372" width="1" height="1"/><rect x="59" y="374" width="1" height="1"/><rect x="59" y="376" width="1" height="1"/><rect x="59" y="378" width="1" height="1"/><rect x="59" y="380" width="1" height="1"/><rect x="59" y="382" width="1" height="1"/><rect x="59" y="384" width="1" height="1"/><rect x="59" y="386" width="1" height="1"/><rect x="59" y="388" width="1" height="1"/><rect x="59" y="390" width="1" height="1"/><rect x="59" y="392" width="1" height="1"/><rect x="59" y="394" width="1" height="1"/><rect x="59" y="396" width="1" height="1"/><rect x="59" y="398" width="1" height="1"/><rect x="59" y="400" width="1" height="1"/><rect x="59" y="402" width="1" height="1"/><rect x="59" y="404" width="1" height="1"/><rect x="59" y="406" width="1" height="1"/><rect x="59" y="408" width="1" height="1"/><rect x="59" y="410" width="1" height="1"/><rect x="59" y="412" width="1" height="1"/><rect x="59" y="414" width="1" height="1"/><rect x="59" y="416" width="1" height="1"/><rect x="59" y="418" width="1" height="1"/><rect x="59" y="420" width="1" height="1"/><rect x="59" y="422" width="1" height="1"/><rect x="59" y="424" width="1" height="1"/><rect x="59" y="426" width="1" height="1"/><rect x="59" y="428" width="1" height="1"/><rect x="59" y="430" width="1" height="1"/><rect x="59" y="432" width="1" height="1"/><rect x="59" y="434" width="1" height="1"/><rect x="59" y="436" width="1" height="1"/><rect x="59" y="438" width="1" height="1"/><rect x="59" y="440" width="1" height="1"/><rect x="59" y="442" width="1" height="1"/><rect x="59" y="444" width="1" height="1"/><rect x="59" y="446" width="1" height="1"/><rect x="59" y="448" width="1" height="1"/><rect x="59" y="450" width="1" height="1"/><rect x="59" y="452" width="1" height="1"/><rect x="59" y="454" width="1" height="1"/><rect x="59" y="456" width="1" height="1"/><rect x="59" y="458" width="1" height="1"/><rect x="59" y="460" width="1" height="1"/><rect x="59" y="462" width="1" height="1"/><rect x="59" y="464" width="1" height="1"/><rect x="59" y="466" width="1" height="1"/><rect x="59" y="468" width="1" height="1"/><rect x="59" y="470" width="1" height="1"/><rect x="79" y="270" width="1" height="1"/><rect x="79" y="272" width="1" height="1"/><rect x="79" y="274" width="1" height="1"/><rect x="79" y="276" width="1" height="1"/><rect x="79" y="278" width="1" height="1"/><rect x="79" y="280" width="1" height="1"/><rect x="79" y="282" width="1" height="1"/><rect x="79" y="284" width="1" height="1"/><rect x="79" y="286" width="1" height="1"/><rect x="79" y="288" width="1" height="1"/><rect x="79" y="290" width="1" height="1"/><rect x="79" y="292" width="1" height="1"/><rect x="79" y="294" width="1" height="1"/><rect x="79" y="296" width="1" height="1"/><rect x="79" y="298" width="1" height="1"/><rect x="79" y="300" width="1" height="1"/><rect x="79" y="302" width="1" height="1"/><rect x="79" y="304" width="1" height="1"/><rect x="79" y="306" width="1" height="1"/><rect x="79" y="308" width="1" height="1"/><rect x="79" y="310" width="1" height="1"/><rect x="79" y="312" width="1" height="1"/><rect x="79" y="314" width="1" height="1"/><rect x="79" y="316" width="1" height="1"/><rect x="79" y="318" width="1" height="1"/><rect x="79" y="320" width="1" height="1"/><rect x="79" y="322" width="1" height="1"/><rect x="79" y="324" width="1" height="1"/><rect x="79" y="326" width="1" height="1"/><rect x="79" y="328" width="1" height="1"/><rect x="79" y="330" width="1" height="1"/><rect x="79" y="332" width="1" height="1"/><rect x="79" y="334" width="1" height="1"/><rect x="79" y="336" width="1" height="1"/><rect x="79" y="338" width="1" height="1"/><rect x="79" y="340" width="1" height="1"/><rect x="79" y="342" width="1" height="1"/><rect x="79" y="344" width="1" height="1"/><rect x="79" y="346" width="1" height="1"/><rect x="79" y="348" width="1" height="1"/><rect x="79" y="350" width="1" height="1"/><rect x="79" y="352" width="1" height="1"/><rect x="79" y="354" width="1" height="1"/><rect x="79" y="356" width="1" height="1"/><rect x="79" y="358" width="1" height="1"/><rect x="79" y="360" width="1" height="1"/><rect x="79" y="362" width="1" height="1"/><rect x="79" y="364" width="1" height="1"/><rect x="79" y="366" width="1" height="1"/><rect x="79" y="368" width="1" height="1"/><rect x="79" y="370" width="1" height="1"/><rect x="79" y="372" width="1" height="1"/><rect x="79" y="374" width="1" height="1"/><rect x="79" y="376" width="1" height="1"/><rect x="79" y="378" width="1" height="1"/><rect x="79" y="380" width="1" height="1"/><rect x="79" y="382" width="1" height="1"/><rect x="79" y="384" width="1" height="1"/><rect x="79" y="386" width="1" height="1"/><rect x="79" y="388" width="1" height="1"/><rect x="79" y="390" width="1" height="1"/><rect x="79" y="392" width="1" height="1"/><rect x="79" y="394" width="1" height="1"/><rect x="79" y="396" width="1" height="1"/><rect x="79" y="398" width="1" height="1"/><rect x="79" y="400" width="1" height="1"/><rect x="79" y="402" width="1" height="1"/><rect x="79" y="404" width="1" height="1"/><rect x="79" y="406" width="1" height="1"/><rect x="79" y="408" width="1" height="1"/><rect x="79" y="410" width="1" height="1"/><rect x="79" y="412" width="1" height="1"/><rect x="79" y="414" width="1" height="1"/><rect x="79" y="416" width="1" height="1"/><rect x="79" y="418" width="1" height="1"/><rect x="79" y="420" width="1" height="1"/><rect x="79" y="422" width="1" height="1"/><rect x="79" y="424" width="1" height="1"/><rect x="79" y="426" width="1" height="1"/><rect x="79" y="428" width="1" height="1"/><rect x="79" y="430" width="1" height="1"/><rect x="79" y="432" width="1" height="1"/><rect x="79" y="434" width="1" height="1"/><rect x="79" y="436" width="1" height="1"/><rect x="79" y="438" width="1" height="1"/><rect x="79" y="440" width="1" height="1"/><rect x="79" y="442" width="1" height="1"/><rect x="79" y="444" width="1" height="1"/><rect x="79" y="446" width="1" height="1"/><rect x="79" y="448" width="1" height="1"/><rect x="79" y="450" width="1" height="1"/><rect x="79" y="452" width="1" height="1"/><rect x="79" y="454" width="1" height="1"/><rect x="79" y="456" width="1" height="1"/><rect x="79" y="458" width="1" height="1"/><rect x="79" y="460" width="1" height="1"/><rect x="79" y="462" width="1" height="1"/><rect x="79" y="464" width="1" height="1"/><rect x="79" y="466" width="1" height="1"/><rect x="79" y="468" width="1" height="1"/><rect x="79" y="470" width="1" height="1"/></g><rect x="14.5" y="120.5" width="8" height="8" rx="1.2" fill="#fff" stroke="#52687a" stroke-width="1"/><rect x="16" y="124" width="5" height="1" fill="#1e2a32"/><rect x="18" y="122" width="1" height="5" fill="#1e2a32"/><rect x="14.5" y="136.5" width="8" height="8" rx="1.2" fill="#fff" stroke="#52687a" stroke-width="1"/><rect x="16" y="140" width="5" height="1" fill="#1e2a32"/><rect x="18" y="138" width="1" height="5" fill="#1e2a32"/><rect x="14.5" y="152.5" width="8" height="8" rx="1.2" fill="#fff" stroke="#52687a" stroke-width="1"/><rect x="16" y="156" width="5" height="1" fill="#1e2a32"/><rect x="18" y="154" width="1" height="5" fill="#1e2a32"/><rect x="14.5" y="167.5" width="8" height="8" rx="1.2" fill="#fff" stroke="#52687a" stroke-width="1"/><rect x="16" y="171" width="5" height="1" fill="#1e2a32"/><rect x="34.5" y="182.5" width="8" height="8" rx="1.2" fill="#fff" stroke="#52687a" stroke-width="1"/><rect x="36" y="186" width="5" height="1" fill="#1e2a32"/><rect x="38" y="184" width="1" height="5" fill="#1e2a32"/><rect x="34.5" y="198.5" width="8" height="8" rx="1.2" fill="#fff" stroke="#52687a" stroke-width="1"/><rect x="36" y="202" width="5" height="1" fill="#1e2a32"/><rect x="38" y="200" width="1" height="5" fill="#1e2a32"/><rect x="34.5" y="214.5" width="8" height="8" rx="1.2" fill="#fff" stroke="#52687a" stroke-width="1"/><rect x="36" y="218" width="5" height="1" fill="#1e2a32"/><rect x="38" y="216" width="1" height="5" fill="#1e2a32"/><rect x="34.5" y="230.5" width="8" height="8" rx="1.2" fill="#fff" stroke="#52687a" stroke-width="1"/><rect x="36" y="234" width="5" height="1" fill="#1e2a32"/><rect x="38" y="232" width="1" height="5" fill="#1e2a32"/><rect x="34.5" y="246.5" width="8" height="8" rx="1.2" fill="#fff" stroke="#52687a" stroke-width="1"/><rect x="36" y="250" width="5" height="1" fill="#1e2a32"/><rect x="54.5" y="261.5" width="8" height="8" rx="1.2" fill="#fff" stroke="#52687a" stroke-width="1"/><rect x="56" y="265" width="5" height="1" fill="#1e2a32"/><rect x="74.5" y="308.5" width="8" height="8" rx="1.2" fill="#fff" stroke="#52687a" stroke-width="1"/><rect x="76" y="312" width="5" height="1" fill="#1e2a32"/><rect x="78" y="310" width="1" height="5" fill="#1e2a32"/><rect x="74.5" y="356.5" width="8" height="8" rx="1.2" fill="#fff" stroke="#52687a" stroke-width="1"/><rect x="76" y="360" width="5" height="1" fill="#1e2a32"/><rect x="94.5" y="371.5" width="8" height="8" rx="1.2" fill="#fff" stroke="#52687a" stroke-width="1"/><rect x="96" y="375" width="5" height="1" fill="#1e2a32"/><path d="M34.5 118.5 L45 121.5 L45 127.5 L34.5 129.5 Z" fill="#9c9c9c" stroke="#4a4a4a" stroke-width="1"/><path d="M35.5 120 L44 122.5 L44 124 L35.5 123 Z" fill="#c8c8c8"/><text x="31.5" y="127.5" font-family="Liberation Sans" font-weight="bold" font-style="italic" font-size="6.5" textLength="17" lengthAdjust="spacingAndGlyphs" fill="#f0ec30" opacity=".9">ATTKC</text><path d="M32 131.5 L37.5 131.5 L37.5 129.5 M42.5 128 L42.5 131.5 L47.5 131.5" fill="none" stroke="#e8f040" stroke-width="1"/><path d="M34.5 134.5 L45 137.5 L45 143.5 L34.5 145.5 Z" fill="#9c9c9c" stroke="#4a4a4a" stroke-width="1"/><path d="M35.5 136 L44 138.5 L44 140 L35.5 139 Z" fill="#c8c8c8"/><text x="31.5" y="143.5" font-family="Liberation Sans" font-weight="bold" font-style="italic" font-size="6.5" textLength="17" lengthAdjust="spacingAndGlyphs" fill="#f0ec30" opacity=".9">ATTKC</text><path d="M32 147.5 L37.5 147.5 L37.5 145.5 M42.5 144 L42.5 147.5 L47.5 147.5" fill="none" stroke="#e8f040" stroke-width="1"/><path d="M34.5 150.5 L45 153.5 L45 159.5 L34.5 161.5 Z" fill="#9c9c9c" stroke="#4a4a4a" stroke-width="1"/><path d="M35.5 152 L44 154.5 L44 156 L35.5 155 Z" fill="#c8c8c8"/><text x="31.5" y="159.5" font-family="Liberation Sans" font-weight="bold" font-style="italic" font-size="6.5" textLength="17" lengthAdjust="spacingAndGlyphs" fill="#f0ec30" opacity=".9">ATTKC</text><path d="M32 163.5 L37.5 163.5 L37.5 161.5 M42.5 160 L42.5 163.5 L47.5 163.5" fill="none" stroke="#e8f040" stroke-width="1"/><path d="M55 182 Q61.5 178.5 68 182 L68 191 Q61.5 194.5 55 191 Z" fill="#c4c4c4" stroke="#8a8a8a" stroke-width=".8"/><path d="M55 185 Q61.5 188 68 185 M55 188 Q61.5 191 68 188" stroke="#8a8a8a" stroke-width=".8" fill="none"/><ellipse cx="61.5" cy="182" rx="6" ry="2" fill="#e4e4e4"/><path d="M63 183 L69.5 184 L69.5 194.5 L63 193 Z" fill="#2a86b4" stroke="#e8f4f8" stroke-width=".7"/><path d="M59.5 185 L66.5 186.5 L66.5 195 L59.5 193 Z" fill="#4cb44c" stroke="#f0f8f0" stroke-width=".7"/><path d="M60 187.5 L66 189 L66 190.5 L60 189 Z" fill="#3a62c4"/><circle cx="58" cy="199" r="3.3" fill="#f4c41c" stroke="#c87410" stroke-width=".8"/><circle cx="57.6" cy="198" r=".9" fill="#7a4a10"/><path d="M56.5 201.5 L59.5 201.5 L59.5 210 L58 211 L56.5 210 L56.5 208 L55.5 207 L56.5 206 Z" fill="#f4c41c" stroke="#c87410" stroke-width=".7"/><circle cx="64" cy="199.5" r="3.8" fill="#f6d4a4" stroke="#b08050" stroke-width=".6"/><path d="M59 210.5 Q59 203.8 64.5 203.8 Q70 203.8 70 210.5 Z" fill="#6aa4ec" stroke="#2a5ab0" stroke-width=".6"/><path d="M64 204 L65 204 L65.3 209.5 L63.7 209.5 Z" fill="#d01818"/><path d="M60 211.5 L64.5 211.5 L61 216.5 L63.5 216.5 L60 220 L62 220 L56 226.5 L58 221 L56 221 L58.5 217.5 L56.5 217.5 Z" fill="#f8e030" stroke="#e05818" stroke-width=".9"/><path d="M53.5 231.5 L58 231.5 L59.5 233 L66 233 L66 241.5 L53.5 241.5 Z" fill="#2e78d8" stroke="#1a4fa0" stroke-width=".7"/><path d="M53.5 241.5 L55.5 235 L68 234 L66 241.5 Z" fill="#5aa6f6" stroke="#2a64b8" stroke-width=".6"/><path d="M56 236 L67 235.2" stroke="#a8d4ff" stroke-width=".8"/><path d="M65.5 227.5 L69.5 227.5 L67.5 231.5 L69.5 231.5 L66.5 236 L68 236 L63.5 241.5 L64.8 236.5 L63.5 236.5 L64.8 232 L63.8 232 Z" fill="#f8c020" stroke="#e07010" stroke-width=".6"/><rect x="53.5" y="243.5" width="13" height="15" fill="#f2f2f2" stroke="#a0a0a0" stroke-width="1"/><path d="M55 252 L57 251 L58 253 L60 249 L61 252 L62 249.5 L63.5 253 L65 251" fill="none" stroke="#e04848" stroke-width=".8"/><rect x="95.5" y="273.5" width="10" height="15" fill="#d8d8d8" stroke="#707070" stroke-width="1"/><rect x="97" y="275" width="7" height="2" fill="#8a9a8a"/><rect x="97" y="279.0" width="1.2" height="1.2" fill="#202020"/><rect x="99" y="279.0" width="1.2" height="1.2" fill="#202020"/><rect x="101" y="279.0" width="1.2" height="1.2" fill="#202020"/><rect x="103" y="279.0" width="1.2" height="1.2" fill="#202020"/><rect x="97" y="281.3" width="1.2" height="1.2" fill="#202020"/><rect x="99" y="281.3" width="1.2" height="1.2" fill="#202020"/><rect x="101" y="281.3" width="1.2" height="1.2" fill="#202020"/><rect x="103" y="281.3" width="1.2" height="1.2" fill="#202020"/><rect x="97" y="283.6" width="1.2" height="1.2" fill="#202020"/><rect x="99" y="283.6" width="1.2" height="1.2" fill="#202020"/><rect x="101" y="283.6" width="1.2" height="1.2" fill="#202020"/><rect x="103" y="283.6" width="1.2" height="1.2" fill="#202020"/><rect x="97" y="285.9" width="1.2" height="1.2" fill="#202020"/><rect x="99" y="285.9" width="1.2" height="1.2" fill="#202020"/><rect x="101" y="285.9" width="1.2" height="1.2" fill="#202020"/><rect x="103" y="285.9" width="1.2" height="1.2" fill="#202020"/><rect x="95" y="289.5" width="11" height="9" fill="#3ca040" stroke="#5050a0" stroke-width="1"/><path d="M94 302 L101 296 L103 298 L96 304 Z" fill="#206a30"/><ellipse cx="104" cy="300" rx="3.5" ry="4.5" fill="#202020"/><ellipse cx="104" cy="301" rx="2" ry="3" fill="#fff"/><path d="M100 304 L103 303 M105 303 L108 304" stroke="#f0b020" stroke-width="1.5"/><rect x="97" y="305.5" width="8" height="6" fill="#50d040" stroke="#308020" stroke-width=".6"/><ellipse cx="101" cy="317" rx="6" ry="3.5" fill="#3a5ab8"/><rect x="93" y="312" width="16" height="4" fill="#e0e040" stroke="#909020" stroke-width=".6"/><rect x="97" y="310" width="8" height="2.5" fill="#f0f0a0"/><rect x="96" y="327" width="10" height="1" fill="#c0c0c0"/><text x="95.5" y="333" font-family="Liberation Sans" font-size="5" textLength="11" lengthAdjust="spacingAndGlyphs" fill="#8a8a8a">DCON</text><path d="M101 338.0 L104 339.5 L104 343.0 L101 344.5 L98 343.0 L98 339.5 Z" fill="#4a7a3a"/><path d="M101 338.0 L104 339.5 L101 341.0 L98 339.5 Z" fill="#e8d8b0"/><path d="M98 342.0 L101 343.5 L101 347.0 L98 348.5 L95 347.0 L95 343.5 Z" fill="#4a7a3a"/><path d="M98 342.0 L101 343.5 L98 345.0 L95 343.5 Z" fill="#e8d8b0"/><path d="M104 342.0 L107 343.5 L107 347.0 L104 348.5 L101 347.0 L101 343.5 Z" fill="#4a7a3a"/><path d="M104 342.0 L107 343.5 L104 345.0 L101 343.5 Z" fill="#e8d8b0"/><path d="M101 346.0 L104 347.5 L104 351.0 L101 352.5 L98 351.0 L98 347.5 Z" fill="#4a7a3a"/><path d="M101 346.0 L104 347.5 L101 349.0 L98 347.5 Z" fill="#e8d8b0"/><ellipse cx="101" cy="360.5" rx="7.5" ry="5.5" fill="none" stroke="#f8c030" stroke-width="1.4" transform="rotate(-20 101 360.5)"/><text x="94" y="360" font-family="Liberation Sans" font-weight="bold" font-style="italic" font-size="6.5" fill="#e03010">ICP</text><text x="98" y="366.5" font-family="Liberation Sans" font-weight="bold" font-style="italic" font-size="6.5" fill="#e03010">DAS</text></g></svg>
  <div class="a" style="left:-10px;top:-117px;width:700px;height:600px"><div class="t" style="left:54px;top:118px;color:#000">Demo station</div><div class="t" style="left:54px;top:134px;color:#000">Loop</div><div class="t" style="left:54px;top:150px;color:#000">Loop SSL</div><div class="t" style="left:32px;top:165px;color:#000">LP-8781</div><div class="t" style="left:74px;top:180px;color:#000">Data Bases</div><div class="t" style="left:74px;top:196px;color:#000">Security</div><div class="t" style="left:74px;top:212px;color:#000">Transports</div><div class="t" style="left:74px;top:228px;color:#000">Transport protocols</div><div class="t" style="left:74px;top:244px;color:#000">Data acquisition</div><div class="t" style="left:72px;top:259px;font-style:italic;color:#000">Module:</div><div class="t" style="left:114px;top:274px;color:#000">Block based calculator</div><div class="t" style="left:114px;top:290px;color:#000">DAQ boards by Comedi</div><div class="t" style="left:114px;top:306px;color:#000">Data sources gate</div><div class="t" style="left:114px;top:322px;color:#000">DCON client</div><div class="t" style="left:114px;top:338px;color:#000">Diamond DAQ boards</div><div class="t" style="left:114px;top:354px;color:#000">ICP DAS hardware</div><div class="t" style="left:112px;top:369px;color:#000">LP-8781</div><div class="t" style="left:132px;top:383px;color:#000">cpu</div><div class="t" style="left:132px;top:397px;color:#000">slot2</div><div class="t" style="left:132px;top:411px;color:#000">slot3</div><div class="t" style="left:132px;top:425px;color:#000">slot4</div><div class="t" style="left:132px;top:439px;color:#fff">slot5</div><div class="t" style="left:132px;top:453px;color:#000">slot6</div><div class="t" style="left:132px;top:467px;color:#000">slot7</div></div>
</div>
<!-- v scrollbar -->
<div class="a" style="left:219px;top:95px;width:16px;height:371px;background:#5f7985"></div><div class="a" style="left:219px;top:314px;width:16px;height:120px;background:repeating-conic-gradient(#fff 0 25%,#93b2c1 0 50%) 0 0/2px 2px"></div>
<div class="a sb" style="left:219px;top:95px;width:16px;height:15px"></div>
<svg style="left:223px;top:100px" width="7" height="4"><path d="M3.5 0L7 4H0Z" fill="#000"/></svg>
<div class="a sl" style="left:219px;top:111px;width:16px;height:203px;background:linear-gradient(90deg,#aac6d3,#97b2bf)"></div>
<svg style="left:223px;top:205px" width="12" height="20"><rect x="0" y="0" width="1" height="1" fill="#5d7483"/><rect x="1" y="0" width="1" height="1" fill="#7f98a6"/><rect x="0" y="1" width="1" height="1" fill="#7f98a6"/><rect x="1" y="1" width="1" height="1" fill="#b4ccd8"/><rect x="4" y="0" width="1" height="1" fill="#5d7483"/><rect x="5" y="0" width="1" height="1" fill="#7f98a6"/><rect x="4" y="1" width="1" height="1" fill="#7f98a6"/><rect x="5" y="1" width="1" height="1" fill="#b4ccd8"/><rect x="8" y="0" width="1" height="1" fill="#5d7483"/><rect x="9" y="0" width="1" height="1" fill="#7f98a6"/><rect x="8" y="1" width="1" height="1" fill="#7f98a6"/><rect x="9" y="1" width="1" height="1" fill="#b4ccd8"/><rect x="0" y="4" width="1" height="1" fill="#5d7483"/><rect x="1" y="4" width="1" height="1" fill="#7f98a6"/><rect x="0" y="5" width="1" height="1" fill="#7f98a6"/><rect x="1" y="5" width="1" height="1" fill="#b4ccd8"/><rect x="4" y="4" width="1" height="1" fill="#5d7483"/><rect x="5" y="4" width="1" height="1" fill="#7f98a6"/><rect x="4" y="5" width="1" height="1" fill="#7f98a6"/><rect x="5" y="5" width="1" height="1" fill="#b4ccd8"/><rect x="8" y="4" width="1" height="1" fill="#5d7483"/><rect x="9" y="4" width="1" height="1" fill="#7f98a6"/><rect x="8" y="5" width="1" height="1" fill="#7f98a6"/><rect x="9" y="5" width="1" height="1" fill="#b4ccd8"/><rect x="0" y="8" width="1" height="1" fill="#5d7483"/><rect x="1" y="8" width="1" height="1" fill="#7f98a6"/><rect x="0" y="9" width="1" height="1" fill="#7f98a6"/><rect x="1" y="9" width="1" height="1" fill="#b4ccd8"/><rect x="4" y="8" width="1" height="1" fill="#5d7483"/><rect x="5" y="8" width="1" height="1" fill="#7f98a6"/><rect x="4" y="9" width="1" height="1" fill="#7f98a6"/><rect x="5" y="9" width="1" height="1" fill="#b4ccd8"/><rect x="8" y="8" width="1" height="1" fill="#5d7483"/><rect x="9" y="8" width="1" height="1" fill="#7f98a6"/><rect x="8" y="9" width="1" height="1" fill="#7f98a6"/><rect x="9" y="9" width="1" height="1" fill="#b4ccd8"/><rect x="0" y="12" width="1" height="1" fill="#5d7483"/><rect x="1" y="12" width="1" height="1" fill="#7f98a6"/><rect x="0" y="13" width="1" height="1" fill="#7f98a6"/><rect x="1" y="13" width="1" height="1" fill="#b4ccd8"/><rect x="4" y="12" width="1" height="1" fill="#5d7483"/><rect x="5" y="12" width="1" height="1" fill="#7f98a6"/><rect x="4" y="13" width="1" height="1" fill="#7f98a6"/><rect x="5" y="13" width="1" height="1" fill="#b4ccd8"/><rect x="8" y="12" width="1" height="1" fill="#5d7483"/><rect x="9" y="12" width="1" height="1" fill="#7f98a6"/><rect x="8" y="13" width="1" height="1" fill="#7f98a6"/><rect x="9" y="13" width="1" height="1" fill="#b4ccd8"/><rect x="0" y="16" width="1" height="1" fill="#5d7483"/><rect x="1" y="16" width="1" height="1" fill="#7f98a6"/><rect x="0" y="17" width="1" height="1" fill="#7f98a6"/><rect x="1" y="17" width="1" height="1" fill="#b4ccd8"/><rect x="4" y="16" width="1" height="1" fill="#5d7483"/><rect x="5" y="16" width="1" height="1" fill="#7f98a6"/><rect x="4" y="17" width="1" height="1" fill="#7f98a6"/><rect x="5" y="17" width="1" height="1" fill="#b4ccd8"/><rect x="8" y="16" width="1" height="1" fill="#5d7483"/><rect x="9" y="16" width="1" height="1" fill="#7f98a6"/><rect x="8" y="17" width="1" height="1" fill="#7f98a6"/><rect x="9" y="17" width="1" height="1" fill="#b4ccd8"/></svg>
<div class="a sb" style="left:219px;top:434px;width:16px;height:16px"></div>
<svg style="left:223px;top:440px" width="7" height="4"><path d="M3.5 0L7 4H0Z" fill="#000"/></svg>
<div class="a sb" style="left:219px;top:450px;width:16px;height:16px"></div>
<svg style="left:223px;top:456px" width="7" height="4"><path d="M0 0H7L3.5 4Z" fill="#000"/></svg>
<!-- h scrollbar -->
<div class="a" style="left:10px;top:466px;width:209px;height:16px;background:#6f8e9c"></div><div class="a" style="left:100px;top:466px;width:87px;height:16px;background:repeating-conic-gradient(#fff 0 25%,#93b2c1 0 50%) 0 0/2px 2px"></div>
<div class="a" style="left:219px;top:466px;width:16px;height:16px;background:#9db8c6"></div>
<div class="a sb" style="left:10px;top:466px;width:15px;height:16px"></div>
<svg style="left:15px;top:470px" width="4" height="7"><path d="M0 3.5L4 0V7Z" fill="#000"/></svg>
<div class="a sl" style="left:25px;top:466px;width:75px;height:16px;background:linear-gradient(#aac6d3,#97b2bf)"></div>
<svg style="left:55px;top:470px" width="20" height="12"><rect x="0" y="0" width="1" height="1" fill="#5d7483"/><rect x="1" y="0" width="1" height="1" fill="#7f98a6"/><rect x="0" y="1" width="1" height="1" fill="#7f98a6"/><rect x="1" y="1" width="1" height="1" fill="#b4ccd8"/><rect x="4" y="0" width="1" height="1" fill="#5d7483"/><rect x="5" y="0" width="1" height="1" fill="#7f98a6"/><rect x="4" y="1" width="1" height="1" fill="#7f98a6"/><rect x="5" y="1" width="1" height="1" fill="#b4ccd8"/><rect x="8" y="0" width="1" height="1" fill="#5d7483"/><rect x="9" y="0" width="1" height="1" fill="#7f98a6"/><rect x="8" y="1" width="1" height="1" fill="#7f98a6"/><rect x="9" y="1" width="1" height="1" fill="#b4ccd8"/><rect x="12" y="0" width="1" height="1" fill="#5d7483"/><rect x="13" y="0" width="1" height="1" fill="#7f98a6"/><rect x="12" y="1" width="1" height="1" fill="#7f98a6"/><rect x="13" y="1" width="1" height="1" fill="#b4ccd8"/><rect x="16" y="0" width="1" height="1" fill="#5d7483"/><rect x="17" y="0" width="1" height="1" fill="#7f98a6"/><rect x="16" y="1" width="1" height="1" fill="#7f98a6"/><rect x="17" y="1" width="1" height="1" fill="#b4ccd8"/><rect x="0" y="4" width="1" height="1" fill="#5d7483"/><rect x="1" y="4" width="1" height="1" fill="#7f98a6"/><rect x="0" y="5" width="1" height="1" fill="#7f98a6"/><rect x="1" y="5" width="1" height="1" fill="#b4ccd8"/><rect x="4" y="4" width="1" height="1" fill="#5d7483"/><rect x="5" y="4" width="1" height="1" fill="#7f98a6"/><rect x="4" y="5" width="1" height="1" fill="#7f98a6"/><rect x="5" y="5" width="1" height="1" fill="#b4ccd8"/><rect x="8" y="4" width="1" height="1" fill="#5d7483"/><rect x="9" y="4" width="1" height="1" fill="#7f98a6"/><rect x="8" y="5" width="1" height="1" fill="#7f98a6"/><rect x="9" y="5" width="1" height="1" fill="#b4ccd8"/><rect x="12" y="4" width="1" height="1" fill="#5d7483"/><rect x="13" y="4" width="1" height="1" fill="#7f98a6"/><rect x="12" y="5" width="1" height="1" fill="#7f98a6"/><rect x="13" y="5" width="1" height="1" fill="#b4ccd8"/><rect x="16" y="4" width="1" height="1" fill="#5d7483"/><rect x="17" y="4" width="1" height="1" fill="#7f98a6"/><rect x="16" y="5" width="1" height="1" fill="#7f98a6"/><rect x="17" y="5" width="1" height="1" fill="#b4ccd8"/><rect x="0" y="8" width="1" height="1" fill="#5d7483"/><rect x="1" y="8" width="1" height="1" fill="#7f98a6"/><rect x="0" y="9" width="1" height="1" fill="#7f98a6"/><rect x="1" y="9" width="1" height="1" fill="#b4ccd8"/><rect x="4" y="8" width="1" height="1" fill="#5d7483"/><rect x="5" y="8" width="1" height="1" fill="#7f98a6"/><rect x="4" y="9" width="1" height="1" fill="#7f98a6"/><rect x="5" y="9" width="1" height="1" fill="#b4ccd8"/><rect x="8" y="8" width="1" height="1" fill="#5d7483"/><rect x="9" y="8" width="1" height="1" fill="#7f98a6"/><rect x="8" y="9" width="1" height="1" fill="#7f98a6"/><rect x="9" y="9" width="1" height="1" fill="#b4ccd8"/><rect x="12" y="8" width="1" height="1" fill="#5d7483"/><rect x="13" y="8" width="1" height="1" fill="#7f98a6"/><rect x="12" y="9" width="1" height="1" fill="#7f98a6"/><rect x="13" y="9" width="1" height="1" fill="#b4ccd8"/><rect x="16" y="8" width="1" height="1" fill="#5d7483"/><rect x="17" y="8" width="1" height="1" fill="#7f98a6"/><rect x="16" y="9" width="1" height="1" fill="#7f98a6"/><rect x="17" y="9" width="1" height="1" fill="#b4ccd8"/></svg>
<div class="a sb" style="left:187px;top:466px;width:16px;height:16px"></div>
<svg style="left:193px;top:470px" width="4" height="7"><path d="M0 3.5L4 0V7Z" fill="#000"/></svg>
<div class="a sb" style="left:203px;top:466px;width:16px;height:16px"></div>
<svg style="left:209px;top:470px" width="4" height="7"><path d="M4 3.5L0 0V7Z" fill="#000"/></svg>
<!--/TREE-->

<!-- right panel -->
<!--RIGHT--><!-- right panel frame -->
<div class="a" style="left:243px;top:93px;width:439px;height:418px;border-top:1px solid #c2e6fa;border-left:1px solid #c2e6fa;border-right:1px solid #0a0f12;border-bottom:1px solid #0a0f12"></div>
<!-- splitter dots -->
<svg style="left:239px;top:232px" width="4" height="136"><g><rect x="0" y="0" width="2" height="2" fill="#7e98a5"/><rect x="1" y="1" width="2" height="2" fill="#e6f4fa"/><rect x="0" y="5" width="2" height="2" fill="#7e98a5"/><rect x="1" y="6" width="2" height="2" fill="#e6f4fa"/><rect x="0" y="10" width="2" height="2" fill="#7e98a5"/><rect x="1" y="11" width="2" height="2" fill="#e6f4fa"/><rect x="0" y="15" width="2" height="2" fill="#7e98a5"/><rect x="1" y="16" width="2" height="2" fill="#e6f4fa"/><rect x="0" y="20" width="2" height="2" fill="#7e98a5"/><rect x="1" y="21" width="2" height="2" fill="#e6f4fa"/><rect x="0" y="25" width="2" height="2" fill="#7e98a5"/><rect x="1" y="26" width="2" height="2" fill="#e6f4fa"/><rect x="0" y="30" width="2" height="2" fill="#7e98a5"/><rect x="1" y="31" width="2" height="2" fill="#e6f4fa"/><rect x="0" y="35" width="2" height="2" fill="#7e98a5"/><rect x="1" y="36" width="2" height="2" fill="#e6f4fa"/><rect x="0" y="40" width="2" height="2" fill="#7e98a5"/><rect x="1" y="41" width="2" height="2" fill="#e6f4fa"/><rect x="0" y="45" width="2" height="2" fill="#7e98a5"/><rect x="1" y="46" width="2" height="2" fill="#e6f4fa"/><rect x="0" y="50" width="2" height="2" fill="#7e98a5"/><rect x="1" y="51" width="2" height="2" fill="#e6f4fa"/><rect x="0" y="55" width="2" height="2" fill="#7e98a5"/><rect x="1" y="56" width="2" height="2" fill="#e6f4fa"/><rect x="0" y="60" width="2" height="2" fill="#7e98a5"/><rect x="1" y="61" width="2" height="2" fill="#e6f4fa"/><rect x="0" y="65" width="2" height="2" fill="#7e98a5"/><rect x="1" y="66" width="2" height="2" fill="#e6f4fa"/><rect x="0" y="70" width="2" height="2" fill="#7e98a5"/><rect x="1" y="71" width="2" height="2" fill="#e6f4fa"/><rect x="0" y="75" width="2" height="2" fill="#7e98a5"/><rect x="1" y="76" width="2" height="2" fill="#e6f4fa"/><rect x="0" y="80" width="2" height="2" fill="#7e98a5"/><rect x="1" y="81" width="2" height="2" fill="#e6f4fa"/><rect x="0" y="85" width="2" height="2" fill="#7e98a5"/><rect x="1" y="86" width="2" height="2" fill="#e6f4fa"/><rect x="0" y="90" width="2" height="2" fill="#7e98a5"/><rect x="1" y="91" width="2" height="2" fill="#e6f4fa"/><rect x="0" y="95" width="2" height="2" fill="#7e98a5"/><rect x="1" y="96" width="2" height="2" fill="#e6f4fa"/><rect x="0" y="100" width="2" height="2" fill="#7e98a5"/><rect x="1" y="101" width="2" height="2" fill="#e6f4fa"/><rect x="0" y="105" width="2" height="2" fill="#7e98a5"/><rect x="1" y="106" width="2" height="2" fill="#e6f4fa"/><rect x="0" y="110" width="2" height="2" fill="#7e98a5"/><rect x="1" y="111" width="2" height="2" fill="#e6f4fa"/><rect x="0" y="115" width="2" height="2" fill="#7e98a5"/><rect x="1" y="116" width="2" height="2" fill="#e6f4fa"/><rect x="0" y="120" width="2" height="2" fill="#7e98a5"/><rect x="1" y="121" width="2" height="2" fill="#e6f4fa"/><rect x="0" y="125" width="2" height="2" fill="#7e98a5"/><rect x="1" y="126" width="2" height="2" fill="#e6f4fa"/><rect x="0" y="130" width="2" height="2" fill="#7e98a5"/><rect x="1" y="131" width="2" height="2" fill="#e6f4fa"/></g></svg>
<!-- heading -->
<div class="a" style="left:391px;top:104px;white-space:nowrap;font-size:19.8px;line-height:24px;font-weight:bold;font-style:italic">Parameter: slot5</div>
<!-- tab pane -->
<div class="a" style="left:254px;top:157px;width:417px;height:343px;border:1px solid #5f737d;border-radius:3px"></div>
<div class="a" style="left:256px;top:159px;width:413px;height:339px;border:1px solid #5f737d;border-radius:2px"></div>
<!-- inactive tabs -->
<div class="a tab" style="left:255px;top:140px;width:83px;height:17px;border-top-left-radius:3px"></div>
<div class="a tab" style="left:337px;top:140px;width:76px;height:17px"></div>
<div class="a tab" style="left:412px;top:140px;width:73px;height:17px;border-bottom-right-radius:2px"></div>
<div class="t" style="left:266px;top:142px">Parameter</div>
<div class="t" style="left:349px;top:142px">Attributes</div>
<div class="t" style="left:424px;top:142px">Archiving</div>
<!-- active tab -->
<div class="a" style="left:485px;top:137px;width:97px;height:24px;background:#9db8c6;border:1px solid #5f737d;border-bottom:none;border-radius:3px 3px 0 0"></div>
<div class="a" style="left:486px;top:157px;width:95px;height:4px;background:#9db8c6"></div>
<div class="t" style="left:497px;top:141px">Configuration</div>
<!-- content -->
<div class="t" style="left:267px;top:173px">Host watchdog timeout (s):</div>
<div class="a" style="left:420px;top:170px;width:105px;height:20px;background:#fff;border:1px solid #566a74;border-radius:3px"></div>
<div class="t" style="left:426px;top:173px">0</div>
<!-- group box -->
<div class="a" style="left:267px;top:200px;width:391px;height:119px;border:1px solid #6d828c;border-radius:2px"></div>
<div class="a" style="left:274px;top:195px;width:44px;height:10px;background:#9db8c6"></div>
<div class="t" style="left:276px;top:193px">Module</div>
<div class="t" style="left:272px;top:213px">Host watchdog status:</div>
<div class="t b" style="left:399px;top:213px;letter-spacing:0">Clear. Disabled, 3 s.</div>
<div class="t" style="left:272px;top:229px">Power on values:</div>
<div class="t b" style="left:371px;top:229px">+05.000 +06.000 +00.000 +00.000</div>
<div class="a btn" style="left:272px;top:246px;width:191px;height:24px"></div>
<div class="t" style="left:276px;top:252px">Set power on values from current</div>
<div class="t" style="left:272px;top:273px;letter-spacing:.15px">Safe values:</div>
<div class="t b" style="left:344px;top:273px">+05.704 +00.000 +00.000 +00.000</div>
<div class="a btn" style="left:272px;top:290px;width:165px;height:24px"></div>
<div class="t" style="left:276px;top:296px">Set safe values from current</div>
<!-- line edit under tree -->
<div class="a" style="left:7px;top:491px;width:230px;height:20px;background:#fff;border:1px solid #566a74;border-radius:3px"></div>
<!-- status bar -->
<div class="a" style="left:589px;top:516px;width:20px;height:20px;border:1px solid #6d828c;border-radius:2px"></div>
<div class="a" style="left:592px;top:518px;width:14px;height:16px;background:#f6f6f6;border-right:1px solid #111;border-bottom:1px solid #111;box-shadow:inset -1px -1px 0 #8a8a8a"></div>
<svg style="left:594px;top:524px" width="8" height="4"><path d="M0 0H8L4 4Z" fill="#000"/></svg>
<div class="a" style="left:611px;top:516px;width:10px;height:20px;border:1px solid #6d828c;border-radius:2px"></div>
<div class="t" style="left:613px;top:519px;font-size:13px;font-weight:bold;letter-spacing:0">*</div>
<div class="a" style="left:623px;top:516px;width:40px;height:20px;border:1px solid #6d828c;border-radius:2px"></div>
<div class="t" style="left:625px;top:519px;color:#0e8a16">roman</div>
<!-- size grip -->
<svg style="left:670px;top:520px" width="16" height="17"><path d="M15 3L2 16M15 7L6 16M15 11L10 16" stroke="#e4f0f6" stroke-width="1.2"/><path d="M15 4.5L3.5 16M15 8.5L7.5 16M15 12.5L11.5 16" stroke="#6f8792" stroke-width=".8"/></svg>
<!--/RIGHT-->

<!-- status -->
</body></html>
